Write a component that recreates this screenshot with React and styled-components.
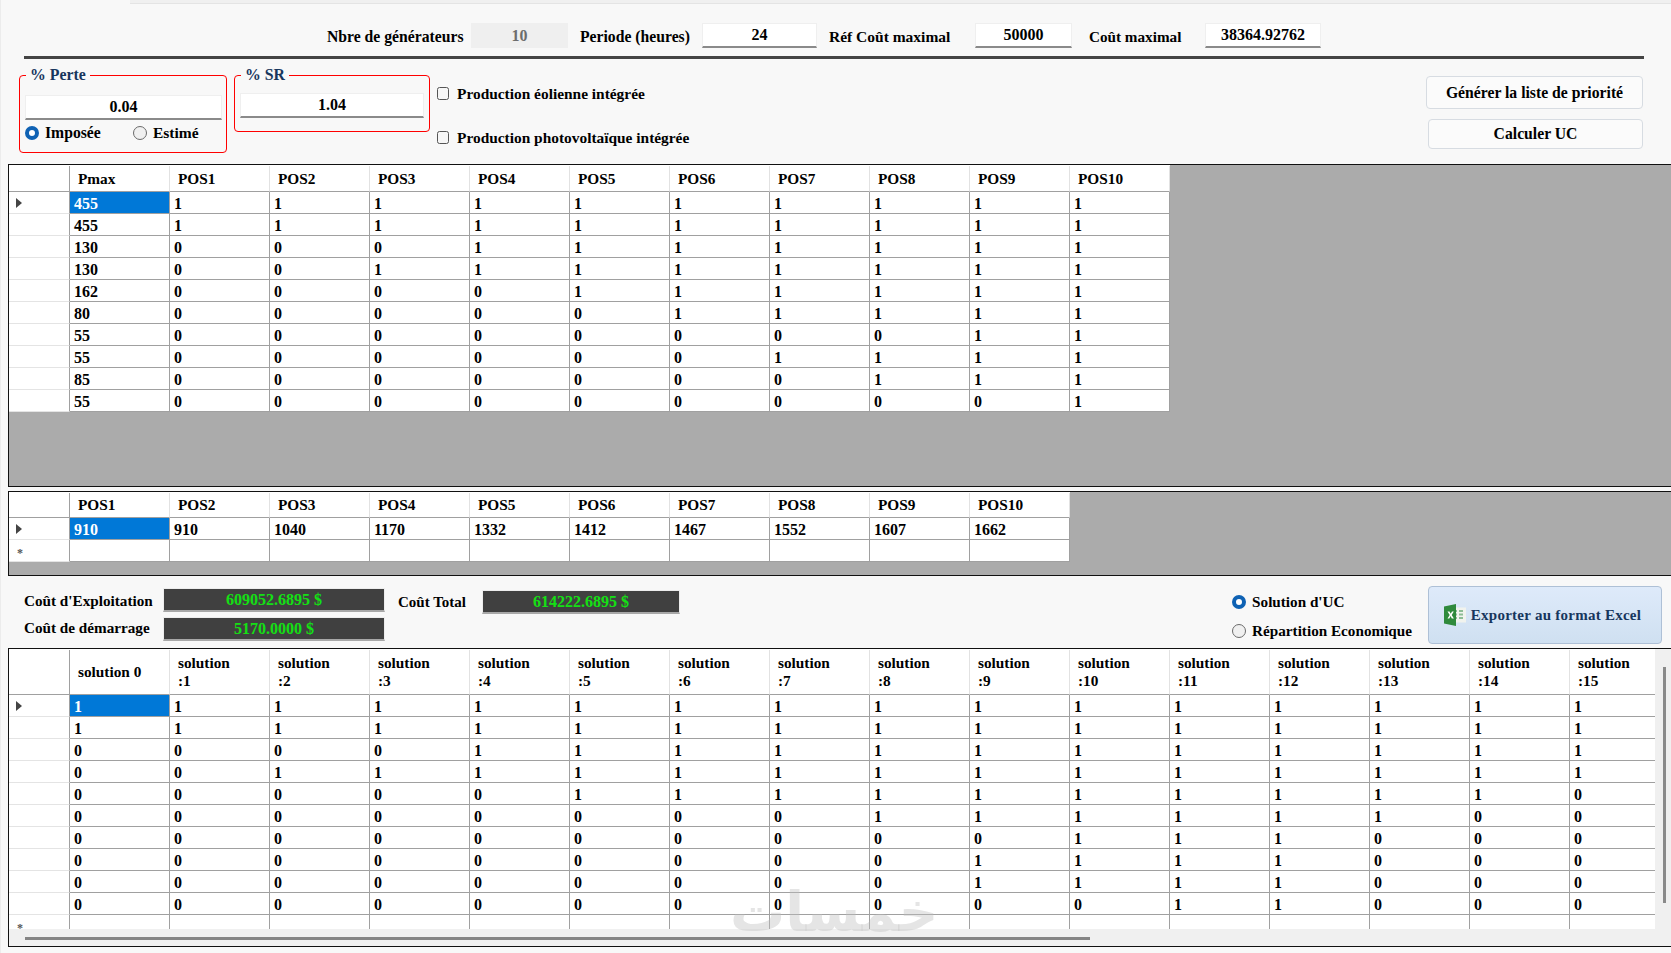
import React from "react";
import styled, { createGlobalStyle } from "styled-components";

const Global = createGlobalStyle`
  html, body { margin: 0; padding: 0; background: #f8f8f8; }
  body { font-family: "Liberation Serif", "Times New Roman", serif; font-weight: 700; font-size: 15px; color: #000; }
`;

const Page = styled.div`
  position: relative;
  width: 1671px;
  height: 953px;
  overflow: hidden;
  background: #f8f8f8;
  display: flex;
  flex-direction: column;
  border-left: 1px solid #ececec;
  box-sizing: border-box;
`;

const TopStrip = styled.div`
  height: 3px;
  margin-left: 129px;
  background: #f0f0f0;
  border-bottom: 1px solid #e4e4e4;
`;

const TopBar = styled.div`
  display: flex;
  align-items: center;
  height: 25px;
  margin-top: 19px;
  padding-left: 326px;
`;

const TopLabel = styled.span`
  box-sizing: border-box;
  width: ${(p) => p.$w}px;
  padding-left: ${(p) => p.$pl || 0}px;
  padding-top: 3px;
  font-size: ${(p) => p.$fs || 15.7}px;
  white-space: nowrap;
  flex: none;
`;

const ValueBox = styled.div`
  box-sizing: border-box;
  width: ${(p) => (p.$w ? `${p.$w}px` : "100%")};
  height: 25px;
  flex: none;
  display: flex;
  align-items: center;
  justify-content: center;
  font-size: 16px;
  background: ${(p) => (p.$disabled ? "#efefef" : "#fff")};
  color: ${(p) => (p.$disabled ? "#6d6d6d" : "#000")};
  border: 1px solid #efefef;
  border-bottom: ${(p) => (p.$disabled ? "1px solid #efefef" : "2px solid #8a8a8a")};
`;

const Rule = styled.div`
  height: 3px;
  margin: 8px 27px 0 23px;
  background: #444;
`;

const Controls = styled.div`
  display: flex;
  height: 97px;
  margin-top: 8px;
  padding: 0 28px 0 18px;
`;

const Group = styled.fieldset`
  box-sizing: border-box;
  width: ${(p) => p.$w}px;
  height: ${(p) => p.$h}px;
  margin: 0 7px 0 0;
  padding: ${(p) => p.$pad};
  border: 1px solid #f00;
  border-radius: 4px;
  flex: none;
`;

const Legend = styled.legend`
  color: #17365d;
  padding: 0 4px;
  margin-left: 1px;
  font-size: 15.8px;
  line-height: 16px;
`;

const RadioRow = styled.div`
  display: flex;
  margin-top: 5px;
  height: 18px;
  align-items: center;
`;

const RadioDot = styled.span`
  box-sizing: border-box;
  display: inline-block;
  flex: none;
  width: 14px;
  height: 14px;
  border-radius: 50%;
  background: ${(p) => (p.$on ? "#fff" : "#f0f0f0")};
  border: ${(p) => (p.$on ? "4px solid #0f62b4" : "1px solid #6a6a6a")};
`;

const RadioItem = styled.label`
  display: flex;
  align-items: center;
  gap: 6px;
  width: ${(p) => (p.$w ? `${p.$w}px` : "auto")};
  white-space: nowrap;
  font-size: ${(p) => p.$fs || 15.2}px;
`;

const Checks = styled.div`
  display: flex;
  flex-direction: column;
  padding-top: 18px;
  gap: 27px;
`;

const CheckItem = styled.label`
  display: flex;
  align-items: center;
  gap: 8px;
  height: 17px;
  white-space: nowrap;
  font-size: 15.4px;
`;

const CheckBox = styled.span`
  box-sizing: border-box;
  width: 12px;
  height: 13px;
  border: 1px solid #555;
  border-radius: 2.5px;
  background: #f6f6f6;
  flex: none;
`;

const Actions = styled.div`
  margin-left: auto;
  display: flex;
  flex-direction: column;
  align-items: flex-end;
  padding-top: 9px;
  gap: 10px;
`;

const ActionButton = styled.button`
  box-sizing: border-box;
  width: ${(p) => p.$w}px;
  height: ${(p) => p.$h}px;
  background: #fbfbfb;
  border: 1px solid #d7dce2;
  border-radius: 4px;
  font: inherit;
  font-size: 15.7px;
  color: #000;
  padding: 0;
`;

const GridFrame = styled.div`
  box-sizing: border-box;
  margin: ${(p) => p.$top}px 0 0 7px;
  height: ${(p) => p.$h}px;
  border: 1.5px solid #111;
  border-right: none;
  background: #ababab;
  overflow: hidden;
  flex: none;
`;

const Table = styled.div`
  display: grid;
  width: max-content;
  grid-template-columns: 61px repeat(${(p) => p.$cols}, 100px);
  grid-template-rows: ${(p) => p.$head}px;
  grid-auto-rows: 22px;
  padding-top: 1px;
  background: #fff;
`;

const Corner = styled.div`
  background: #fff;
  border-right: 1.5px solid #a0a0a0;
  border-bottom: 1.5px solid #a0a0a0;
`;

const HeadCell = styled.div`
  box-sizing: border-box;
  display: flex;
  align-items: center;
  padding: 0 0 0 8px;
  background: #fff;
  border-right: 1.5px solid #e2e2e2;
  border-bottom: 1.5px solid #a0a0a0;
  font-size: 15.3px;
  line-height: 18px;
`;

const WrappedHeadCell = styled(HeadCell)`
  display: block;
  padding-top: 4px;
`;

const RowHead = styled.div`
  box-sizing: border-box;
  display: flex;
  align-items: center;
  padding: ${(p) => (p.$star ? "6px 0 0 8px" : "0 0 0 7px")};
  background: #fff;
  color: #555;
  font-size: 12px;
  border-right: 1.5px solid #a0a0a0;
  border-bottom: 1.5px solid #e4e4e4;
`;

const Arrow = styled.span`
  width: 0;
  height: 0;
  border-left: 6px solid #444;
  border-top: 5px solid transparent;
  border-bottom: 5px solid transparent;
`;

const Cell = styled.div`
  box-sizing: border-box;
  display: flex;
  align-items: center;
  padding: 2px 0 0 4px;
  font-size: 16px;
  background: ${(p) => (p.$sel ? "#0078d7" : "#fff")};
  color: ${(p) => (p.$sel ? "#fff" : "#000")};
  border-right: 1.5px solid #a0a0a0;
  border-bottom: 1.5px solid #a0a0a0;
`;

const CostRow = styled.div`
  display: flex;
  height: 58px;
  margin-top: 10px;
  padding-right: 9px;
  flex: none;
`;

const CostGrid = styled.div`
  display: grid;
  grid-template-columns: 139px 222px;
  grid-template-rows: 24px 24px;
  row-gap: 5px;
  margin: 2px 0 0 23px;
  align-items: center;
`;

const CostLabel = styled.span`
  white-space: nowrap;
  font-size: 15.2px;
  padding: ${(p) => p.$pt || 0}px 0 ${(p) => p.$pb || 0}px;
`;

const CostBox = styled.div`
  box-sizing: border-box;
  width: ${(p) => p.$w}px;
  height: 24px;
  background: #404040;
  color: #14e014;
  font-size: 16px;
  display: flex;
  align-items: center;
  justify-content: center;
  border: 1px solid #ededed;
  border-bottom: 2px solid #a8a8a8;
`;

const TotalGroup = styled.div`
  display: flex;
  align-items: center;
  height: 24px;
  margin: 4px 0 0 13px;
  gap: 16px;
`;

const SolutionRadios = styled.div`
  margin-left: auto;
  margin-right: 16px;
  padding-top: 7px;
  display: flex;
  flex-direction: column;
  gap: 11px;
`;

const ExportButton = styled.button`
  box-sizing: border-box;
  width: 234px;
  height: 58px;
  display: flex;
  align-items: center;
  justify-content: center;
  gap: 4px;
  padding: 0 6px 0 0;
  border: 1px solid #aec0d6;
  border-radius: 4px;
  background: linear-gradient(#deeafa, #cfe0f1);
  font: inherit;
  letter-spacing: 0.25px;
  color: #17365d;
`;

const SolutionFrame = styled(GridFrame)`
  display: flex;
  flex-direction: column;
  background: #f0f0f0;
`;

const SolutionBody = styled.div`
  display: flex;
  height: 280px;
  flex: none;
`;

const Viewport = styled.div`
  width: 1646px;
  overflow: hidden;
  background: #fff;
  flex: none;
`;

const VBar = styled.div`
  flex: 1;
  background: #f0f0f0;
  padding: 18px 0 0 8px;
`;

const VThumb = styled.div`
  width: 3px;
  height: 236px;
  background: #8a8a8a;
`;

const HBar = styled.div`
  flex: 1;
  padding: 8px 0 0 16px;
`;

const HThumb = styled.div`
  width: 1065px;
  height: 3px;
  background: #858585;
`;

const Watermark = styled.div`
  position: absolute;
  left: 729px;
  top: 876px;
  font-family: "DejaVu Sans", sans-serif;
  font-weight: 700;
  font-size: 55px;
  line-height: 72px;
  color: rgba(190, 190, 190, 0.4);
  pointer-events: none;
  white-space: nowrap;
`;

const pmaxRows = [
  [455, 10], [455, 10], [130, 7], [130, 8], [162, 6],
  [80, 5], [55, 2], [55, 4], [85, 3], [55, 1],
];

const solutionRows = [
  "1111111111111111",
  "1111111111111111",
  "0000111111111111",
  "0011111111111111",
  "0000011111111110",
  "0000000011111100",
  "0000000000111000",
  "0000000001111000",
  "0000000001111000",
  "0000000000011000",
];

const positions = Array.from({ length: 10 }, (_, i) => `POS${i + 1}`);
const solutionHeads = Array.from({ length: 15 }, (_, i) => i + 1);

const ExcelIcon = () => (
  <svg width="24" height="24" viewBox="0 0 24 24" aria-hidden="true">
    <rect x="9" y="4.5" width="14" height="15" fill="#f1f3ee" />
    <path d="M11 7h3v2h-3zM16 7h4v2h-4zM11 10.500h3v2h-3zM16 10.500h4v2h-4zM11 14h3v2h-3zM16 14h4v2h-4z" fill="#8dbd96" />
    <path d="M1 3.500 13 1v22L1 20.500z" fill="#2f8a3c" />
    <path d="M4.500 8.500h2l1.200 2.300 1.300-2.300h1.800l-2.100 3.400 2.200 3.600H8.800l-1.200-2.400-1.300 2.400H4.500l2.200-3.600z" fill="#fff" />
  </svg>
);

const PriorityGrid = () => (
  <Table $cols={11} $head={26}>
    <Corner />
    <HeadCell>Pmax</HeadCell>
    {positions.map((p) => <HeadCell key={p}>{p}</HeadCell>)}
    {pmaxRows.map(([pmax, ones], r) => (
      <React.Fragment key={r}>
        <RowHead>{r === 0 && <Arrow />}</RowHead>
        <Cell $sel={r === 0}>{pmax}</Cell>
        {positions.map((_, c) => <Cell key={c}>{c >= 10 - ones ? 1 : 0}</Cell>)}
      </React.Fragment>
    ))}
  </Table>
);

const TotalsGrid = () => (
  <Table $cols={10} $head={25}>
    <Corner />
    {positions.map((p) => <HeadCell key={p}>{p}</HeadCell>)}
    <RowHead><Arrow /></RowHead>
    {[910, 910, 1040, 1170, 1332, 1412, 1467, 1552, 1607, 1662].map((v, i) => (
      <Cell key={i} $sel={i === 0}>{v}</Cell>
    ))}
    <RowHead $star>*</RowHead>
    {positions.map((p) => <Cell key={p} />)}
  </Table>
);

const SolutionGrid = () => (
  <Table $cols={16} $head={45}>
    <Corner />
    <HeadCell>solution 0</HeadCell>
    {solutionHeads.map((n) => (
      <WrappedHeadCell key={n}>solution<br />:{n}</WrappedHeadCell>
    ))}
    {solutionRows.map((row, r) => (
      <React.Fragment key={r}>
        <RowHead>{r === 0 && <Arrow />}</RowHead>
        {row.split("").map((v, c) => <Cell key={c} $sel={r === 0 && c === 0}>{v}</Cell>)}
      </React.Fragment>
    ))}
    <RowHead $star>*</RowHead>
    {solutionRows[0].split("").map((_, c) => <Cell key={c} />)}
  </Table>
);

export default function App() {
  return (
    <Page>
      <Global />
      <TopStrip />
      <TopBar>
        <TopLabel $w={144}>Nbre de générateurs</TopLabel>
        <ValueBox $w={97} $disabled>10</ValueBox>
        <TopLabel $w={134} $pl={12}>Periode (heures)</TopLabel>
        <ValueBox $w={115}>24</ValueBox>
        <TopLabel $w={158} $pl={12} $fs={15.5}>Réf Coût maximal</TopLabel>
        <ValueBox $w={97}>50000</ValueBox>
        <TopLabel $w={133} $pl={17} $fs={15.2}>Coût maximal</TopLabel>
        <ValueBox $w={116}>38364.92762</ValueBox>
      </TopBar>
      <Rule />
      <Controls>
        <Group $w={208} $h={86} $pad="12px 4px 0 5px">
          <Legend>% Perte</Legend>
          <ValueBox>0.04</ValueBox>
          <RadioRow style={{ marginTop: 4 }}>
            <RadioItem $w={108} $fs={15.7}><RadioDot $on />Imposée</RadioItem>
            <RadioItem $fs={15.5}><RadioDot />Estimé</RadioItem>
          </RadioRow>
        </Group>
        <Group $w={196} $h={65} $pad="10px 5px 0 5px">
          <Legend>% SR</Legend>
          <ValueBox>1.04</ValueBox>
        </Group>
        <Checks>
          <CheckItem><CheckBox />Production éolienne intégrée</CheckItem>
          <CheckItem><CheckBox />Production photovoltaïque intégrée</CheckItem>
        </Checks>
        <Actions>
          <ActionButton $w={217} $h={33}>Générer la liste de priorité</ActionButton>
          <ActionButton $w={215} $h={30}>Calculer UC</ActionButton>
        </Actions>
      </Controls>
      <GridFrame $top={0} $h={323}><PriorityGrid /></GridFrame>
      <GridFrame $top={4} $h={85}><TotalsGrid /></GridFrame>
      <CostRow>
        <CostGrid>
          <CostLabel $pt={1}>Coût d'Exploitation</CostLabel>
          <CostBox $w={222}>609052.6895 $</CostBox>
          <CostLabel $pb={3}>Coût de démarrage</CostLabel>
          <CostBox $w={222}>5170.0000 $</CostBox>
        </CostGrid>
        <TotalGroup>
          <span>Coût Total</span>
          <CostBox $w={198}>614222.6895 $</CostBox>
        </TotalGroup>
        <SolutionRadios>
          <RadioItem><RadioDot $on />Solution d'UC</RadioItem>
          <RadioItem><RadioDot />Répartition Economique</RadioItem>
        </SolutionRadios>
        <ExportButton><ExcelIcon />Exporter au format Excel</ExportButton>
      </CostRow>
      <SolutionFrame $top={4} $h={299}>
        <SolutionBody>
          <Viewport><SolutionGrid /></Viewport>
          <VBar><VThumb /></VBar>
        </SolutionBody>
        <HBar><HThumb /></HBar>
      </SolutionFrame>
      <Watermark dir="rtl">خمسات</Watermark>
    </Page>
  );
}
